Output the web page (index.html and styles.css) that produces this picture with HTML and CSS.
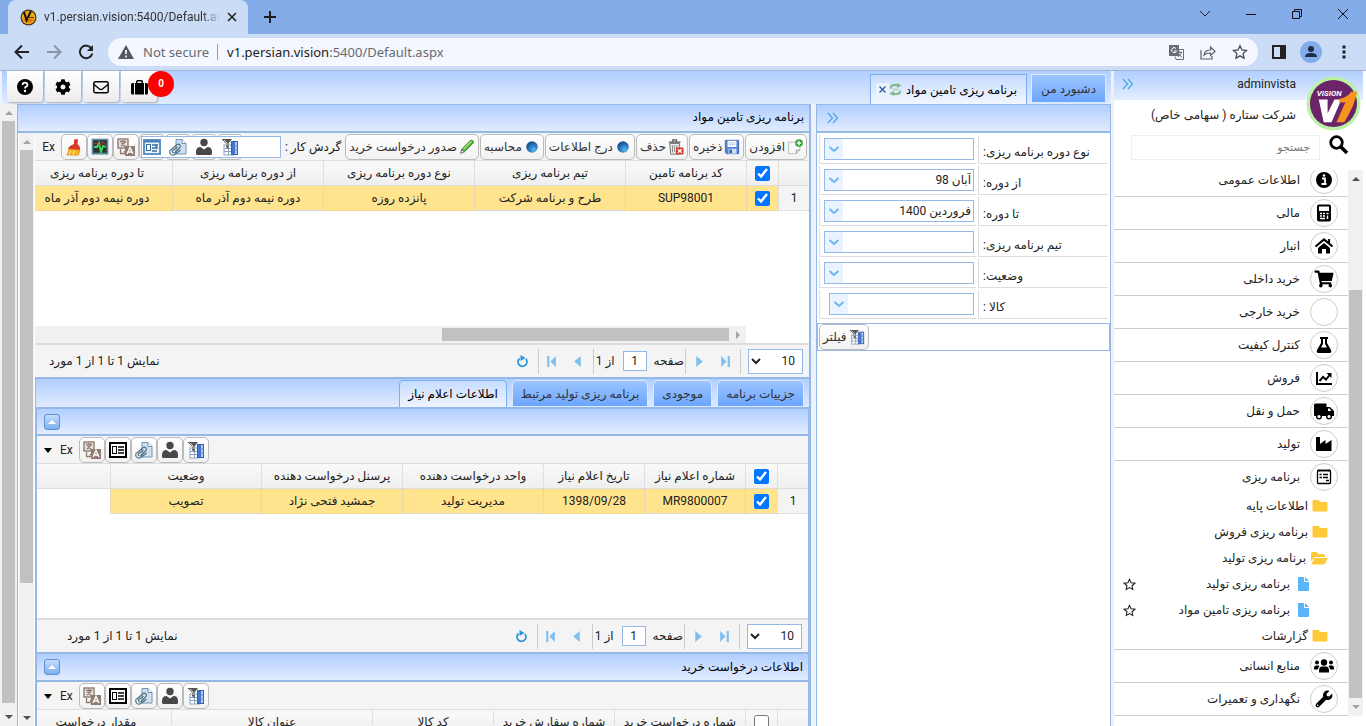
FILE: index.html
```html
<!DOCTYPE html>
<html lang="fa">
<head>
<meta charset="utf-8">
<title>v1.persian.vision:5400/Default.aspx</title>
<link rel="stylesheet" href="styles.css">
</head>
<body>
<svg class="defs" aria-hidden="true">
  <symbol id="i-filter" viewBox="0 0 18 18"><rect x="3" y="7" width="9" height="10" fill="#fff" stroke="#8aa0c4"/><path d="M3 10.500h8M3 13.500h8M7.500 8v9" stroke="#8aa0c4"/><rect x="10.500" y="3.500" width="6" height="13" fill="#b5cdf5" stroke="#3b5d9b"/><rect x="11" y="4" width="3" height="12" fill="#3d74d6"/><path d="M11 8h6M11 12h6" stroke="#5c80bd"/><path d="M.5 1h10.500L7.500 5.500V11L5 9V5.500z" fill="#555"/><path d="M3 2l3 3v3" stroke="#ddd" fill="none"/></symbol>
  <symbol id="i-person" viewBox="0 0 18 18"><circle cx="9" cy="4.500" r="3.700" fill="#484848"/><path d="M1 14q0-5 4.500-5L9 11.500 12.500 9Q17 9 17 14v1.500q0 1.500-1.500 1.500h-13Q1 17 1 15.500z" fill="#484848"/></symbol>
  <symbol id="i-clip" viewBox="0 0 18 18"><path d="M7 1.500h6l4 4V16H7z" fill="#cfe1f0" stroke="#6e93b8"/><path d="M13 1.500v4h4" fill="#fff" stroke="#6e93b8"/><path d="M2 12l6-5.500q2-1 3 .5t-.5 3L6 14.500q-1.500 1-2.300 0t.3-2L8.500 9M1.500 11.500Q0 14 1.500 16t4.500.5L11.500 12" fill="none" stroke="#4d6f85" stroke-width="1.200"/></symbol>
  <symbol id="i-card" viewBox="0 0 18 18"><rect x="1" y="2" width="16" height="14" fill="#fff" stroke="#000" stroke-width="2"/><rect x="3.500" y="5.500" width="4" height="7" fill="#fff" stroke="#000"/><path d="M9 6h6M9 9h6M9 12h6" stroke="#000" stroke-width="1.500"/></symbol>
  <symbol id="i-form" viewBox="0 0 18 18"><rect x="1" y="2" width="16" height="14" fill="#e9f3fc" stroke="#5b93c4" stroke-width="2"/><path d="M1 3.500h16" stroke="#4a7fb5" stroke-width="2"/><rect x="3.500" y="6.500" width="4" height="6" fill="#fff" stroke="#3a6f9f"/><path d="M9 7h6M9 10h6M9 13h5M12 7l2 2" stroke="#3a6f9f" stroke-width="1.400"/></symbol>
  <symbol id="i-lang" viewBox="0 0 18 18"><rect x="1" y="1" width="10" height="9" fill="#e7dfda" stroke="#8e7c73" stroke-width="1.400"/><path d="M3 3.500h6M6 2v2M4 8l4-4M4.500 5l4 4M3.500 11v4.500H9M7 13l2.500 2.500" stroke="#8e7c73" stroke-width="1.300" fill="none"/><rect x="8" y="8" width="10" height="10" fill="#8e7c73"/><path d="M10 16l3-6.500 3 6.500M11.200 14h3.600" fill="none" stroke="#fff" stroke-width="1.400"/></symbol>
  <symbol id="i-chart" viewBox="0 0 18 18"><rect x="1.500" y="1.500" width="15" height="14" fill="#2a3438" stroke="#5a87a4" stroke-width="1.600"/><path d="M3 9h3l2-4 2 9 2-6 3 1" stroke="#3ddb55" stroke-width="1.800" fill="none"/><path d="M3 6l3-1 3 2 3-3 3 3" stroke="#d33" fill="none"/><path d="M1 16.500h16" stroke="#9fb4c0"/></symbol>
  <symbol id="i-brush" viewBox="0 0 18 18"><path d="M4 9l11 2-1.500 6H2q2-3 2-8z" fill="#f5b52c" stroke="#d99a20"/><path d="M5 13l-1 4M9 13l-1 4" stroke="#fde08a"/><path d="M3.500 11L5 8l4-2V2q2.500-2 4 0l-.5 4 2.500 3-.5 3z" fill="#d83a27"/></symbol>
  <symbol id="i-add" viewBox="0 0 18 18"><path d="M1.500 3.500h13v9l-4 4h-9z" fill="#f8f8f8" stroke="#b5b5b5"/><path d="M10.500 16.500v-4h4" fill="#ddd" stroke="#999"/><circle cx="13.500" cy="4.500" r="4.300" fill="#25a32a"/><path d="M13.500 2v5M11 4.500h5" stroke="#fff" stroke-width="1.600"/></symbol>
  <symbol id="i-save" viewBox="0 0 18 18"><path d="M1.500 1.500h15v15H3l-1.500-1.500z" fill="#5583d7" stroke="#3a61ae"/><rect x="4" y="2" width="10" height="7" fill="#fff"/><path d="M5 4.500h8M5 6.500h8" stroke="#aac1e8"/><rect x="5" y="11" width="9" height="5.500" fill="#d3e0f5"/><rect x="6" y="12" width="3" height="4" fill="#3a5da5"/></symbol>
  <symbol id="i-trash" viewBox="0 0 18 18"><path d="M2 5h11l-1 12H3z" fill="#eee" stroke="#666"/><path d="M5 7v8M7.500 7v8M10 7v8" stroke="#777"/><path d="M1 3.500h13M5.500 3V1h4v2" stroke="#555" stroke-width="1.500" fill="none"/><rect x="9" y="9.500" width="8.500" height="8" rx="1.500" fill="#d43a20"/><path d="M11 11.500l4.500 4M15.500 11.500l-4.500 4" stroke="#fff" stroke-width="1.600"/></symbol>
  <radialGradient id="g-ball" cx=".65" cy=".75" r=".75"><stop offset="0" stop-color="#5cb7f0"/><stop offset=".6" stop-color="#2473b8"/><stop offset="1" stop-color="#174a86"/></radialGradient>
  <symbol id="i-ball" viewBox="0 0 18 18"><circle cx="9" cy="9" r="6.500" fill="url(#g-ball)"/></symbol>
  <symbol id="i-pencil" viewBox="0 0 18 18"><path d="M2 16l1.500-5L13 1.500q1.500-.5 2.500.5t.5 2.500L6.500 14z" fill="#4caf2f" stroke="#2e7d1c"/><path d="M5 11.500l9-9" stroke="#b4ea8d" stroke-width="1.500"/><path d="M2 16l1-4 3 2.500z" fill="#eee" stroke="#555" stroke-width=".7"/></symbol>
  <symbol id="i-dbl" viewBox="0 0 12 12"><path d="M1 1l4.500 5L1 11M6 1l4.500 5L6 11" fill="none" stroke="#4fa6e8" stroke-width="1.300"/></symbol>
  <symbol id="i-down" viewBox="0 0 12 12"><path d="M1.500 4L6 8l4.500-4" fill="none" stroke="#6cb8ee" stroke-width="2"/></symbol>
  <symbol id="i-next" viewBox="0 0 12 12"><path d="M3 1v10l6-5z" fill="#7dc0f0"/></symbol>
  <symbol id="i-last" viewBox="0 0 12 12"><path d="M2 1v10l5-5zM8 1h2v10H8z" fill="#7dc0f0"/></symbol>
  <symbol id="i-refresh" viewBox="0 0 13 13"><path d="M3.500 3.500A4.500 4.500 0 1 0 9.800 3.800" fill="none" stroke="#2b93d8" stroke-width="1.700"/><path d="M4.500 0l5 3-5 3z" fill="#2b93d8"/></symbol>
  <symbol id="i-star" viewBox="0 0 24 24"><path d="M12 2.500l2.900 6.400 6.900.8-5.100 4.700 1.400 6.900-6.100-3.500-6.100 3.500 1.400-6.900-5.100-4.700 6.900-.8z" fill="none" stroke="currentColor" stroke-width="2"/></symbol>
  <symbol id="i-folder" viewBox="0 0 16 14"><path d="M1.500 1h5l2 2h6q1 0 1 1v7.500q0 1-1 1h-13q-1 0-1-1V2q0-1 1-1z" fill="#ffca3a"/></symbol>
  <symbol id="i-open" viewBox="0 0 18 14"><path d="M1 10V2.500Q1 1 2.500 1h4l2 2h5q1.500 0 1.500 1.500V6H5z" fill="#ffca3a"/><path d="M5.500 7H17q1 0 .5 1l-2.500 4.500q-.5 1-1.500 1H2q-1 0-.5-1L4 8q.5-1 1.500-1z" fill="#ffca3a"/></symbol>
  <symbol id="i-file" viewBox="0 0 12 14"><path d="M2 0h5v5h5v8q0 1-1 1H2q-1 0-1-1V1q0-1 1-1zM8 0l4 4H8z" fill="#5ab5fa"/></symbol>
</svg>

<header class="browser" dir="ltr">
  <div class="strip">
    <div class="btab">
      <svg class="fav" viewBox="0 0 17 17"><circle cx="8.500" cy="8.500" r="8" fill="#4a3a1c"/><circle cx="8.500" cy="8.500" r="6.800" fill="#f0a818"/><path d="M3 10h11a6 6 0 0 1-11 0z" fill="#d97a0a"/><path d="M4 3l2.500 8L11 2" stroke="#111" stroke-width="2" fill="none"/><path d="M7 8.500h7" stroke="#5b3405"/></svg>
      <span class="btitle">v1.persian.vision:5400/Default.aspx</span>
      <button class="plain" aria-label="Close tab"><svg width="10" height="10" viewBox="0 0 10 10"><path d="M1 1l8 8M9 1L1 9" stroke="#222" stroke-width="1.600"/></svg></button>
    </div>
    <button class="plain newtab" aria-label="New tab"><svg width="12" height="12" viewBox="0 0 12 12"><path d="M6 0v12M0 6h12" stroke="#1c1c1c" stroke-width="2"/></svg></button>
    <div class="winbtns">
      <button class="plain" aria-label="Search tabs"><svg width="12" height="12" viewBox="0 0 12 12"><path d="M1 3l5 5 5-5" fill="none" stroke="#222"/></svg></button>
      <button class="plain" aria-label="Minimize"><svg width="12" height="12" viewBox="0 0 12 12"><path d="M1 6.500h10" stroke="#111"/></svg></button>
      <button class="plain" aria-label="Restore"><svg width="12" height="12" viewBox="0 0 12 12"><path d="M1.500 3.500h7v7h-7zM3.500 3.500v-2h7v7h-2" fill="none" stroke="#111"/></svg></button>
      <button class="plain" aria-label="Close"><svg width="12" height="12" viewBox="0 0 12 12"><path d="M1 1l10 10M11 1L1 11" stroke="#111"/></svg></button>
    </div>
  </div>
  <div class="navbar">
    <button class="plain" aria-label="Back"><svg width="16" height="16" viewBox="0 0 16 16"><path d="M15 8H2M8 1.500L1.500 8 8 14.500" fill="none" stroke="#222" stroke-width="2"/></svg></button>
    <button class="plain" aria-label="Forward"><svg width="16" height="16" viewBox="0 0 16 16"><path d="M1 8h13M8 1.500L14.500 8 8 14.500" fill="none" stroke="#8a95a8" stroke-width="2"/></svg></button>
    <button class="plain" aria-label="Reload"><svg width="16" height="16" viewBox="0 0 16 16"><path d="M13.500 4.500A6.300 6.300 0 1 0 14.300 9.500" fill="none" stroke="#222" stroke-width="2"/><path d="M15 1v6H9z" fill="#222"/></svg></button>
    <div class="omni">
      <svg width="16" height="14" viewBox="0 0 16 14"><path d="M8 0l8 14H0z" fill="#55595f"/><path d="M8 5v4M8 10.500v2" stroke="#fff" stroke-width="1.600"/></svg>
      <span class="notsec">Not secure</span>
      <span class="url"><b>v1.persian.vision</b>:5400/Default.aspx</span>
      <svg width="15" height="15" viewBox="0 0 15 15"><rect x="0" y="0" width="10" height="11" fill="#6b6f75"/><path d="M7 3.500A2.500 2.500 0 1 0 7.500 6H5" fill="none" stroke="#fff"/><path d="M6 11.500l1 3h7.500V4.500H10" fill="none" stroke="#6b6f75"/><path d="M8.500 7.500H13M11 6v1.500M9 12l3.500-4M9.500 8.500l3.500 4" stroke="#6b6f75"/></svg>
      <svg width="16" height="15" viewBox="0 0 16 15"><path d="M1 5v9h11v-3M4 10q1-5 6.500-5V2l4.500 4.500-4.500 4V8Q6 8 4 10z" fill="none" stroke="#5c6066" stroke-width="1.200"/></svg>
      <svg class="bstar" width="16" height="16"><use href="#i-star"/></svg>
    </div>
    <svg width="14" height="14" viewBox="0 0 14 14"><rect x="1" y="1" width="12" height="12" fill="none" stroke="#222" stroke-width="2"/><path d="M8 1h5v12H8z" fill="#222"/></svg>
    <svg class="profile" width="22" height="22" viewBox="0 0 22 22"><circle cx="11" cy="11" r="11" fill="#84ace9"/><circle cx="11" cy="8" r="3" fill="#1d2c44"/><path d="M5 16q0-4 6-4t6 4z" fill="#1d2c44"/></svg>
    <button class="plain" aria-label="Menu"><svg width="4" height="14" viewBox="0 0 4 14"><path d="M.5.5h3v3h-3zM.5 5.500h3v3h-3zM.5 10.500h3v3h-3z" fill="#222"/></svg></button>
  </div>
</header>

<div class="app" dir="ltr">
  <main class="main">
    <div class="topbar">
      <div class="topbtns">
        <button class="tbtn" aria-label="راهنما"><svg width="16" height="16" viewBox="0 0 16 16"><circle cx="8" cy="8" r="8"/><path d="M5.500 6q.2-2.300 2.500-2.300T10.500 6q0 1.200-1.300 1.700T8 9.500" fill="none" stroke="#fff" stroke-width="1.800"/><circle cx="8" cy="12" r="1.200" fill="#fff"/></svg></button>
        <button class="tbtn" aria-label="تنظیمات"><svg width="16" height="16" viewBox="0 0 512 512"><path d="M487.400 315.700l-42.600-24.600c4.300-23.200 4.300-47 0-70.200l42.600-24.600c4.900-2.800 7.100-8.600 5.500-14-11.100-35.600-30-67.800-54.700-94.600-3.800-4.100-10-5.100-14.800-2.300L380.800 110c-17.900-15.400-38.500-27.300-60.800-35.100V25.800c0-5.600-3.900-10.500-9.400-11.700-36.700-8.200-74.300-7.800-109.200 0-5.500 1.200-9.400 6.100-9.400 11.700V75c-22.200 7.900-42.800 19.800-60.800 35.100L88.700 85.500c-4.900-2.800-11-1.900-14.800 2.300-24.700 26.700-43.600 58.900-54.700 94.600-1.700 5.400.6 11.200 5.500 14L67.300 221c-4.300 23.200-4.300 47 0 70.200l-42.600 24.600c-4.900 2.800-7.100 8.600-5.500 14 11.100 35.600 30 67.800 54.700 94.600 3.800 4.100 10 5.100 14.800 2.300l42.600-24.600c17.900 15.400 38.500 27.300 60.800 35.100v49.200c0 5.600 3.900 10.500 9.400 11.700 36.700 8.200 74.300 7.800 109.200 0 5.500-1.200 9.400-6.100 9.400-11.700v-49.200c22.200-7.900 42.800-19.800 60.800-35.100l42.600 24.600c4.900 2.800 11 1.900 14.800-2.300 24.700-26.700 43.600-58.900 54.700-94.600 1.500-5.500-.7-11.300-5.600-14.100zM256 336c-44.100 0-80-35.900-80-80s35.900-80 80-80 80 35.900 80 80-35.900 80-80 80z"/></svg></button>
        <button class="tbtn" aria-label="پیام ها"><svg width="16" height="16" viewBox="0 0 16 16"><rect x=".8" y="2.800" width="14.400" height="11" rx="1.500" fill="none" stroke="#000" stroke-width="1.400"/><path d="M1 5.500l5.500 4.500q1.500 1 3 0L15 5.500" fill="none" stroke="#000" stroke-width="1.400"/></svg></button>
        <button class="tbtn" aria-label="کارتابل"><svg width="17" height="16" viewBox="0 0 17 16"><path d="M4 4h1V2.500Q5 1 6.500 1h4Q12 1 12 2.500V4h1v11.500H4zM6.500 4h4V2.500h-4zM0 5.500Q0 4 1.500 4H3v11.500H1.500Q0 15.500 0 14zM14 4h1.500Q17 4 17 5.500V14q0 1.500-1.500 1.500H14z" fill-rule="evenodd"/></svg><span class="badge">0</span></button>
      </div>
      <nav class="toptabs" dir="rtl">
        <a class="ttab" href="#">دشبورد من</a>
        <a class="ttab on" href="#">برنامه ریزی تامین مواد
          <svg width="13" height="13" viewBox="0 0 13 13"><path d="M1.500 5.500Q2 2 5.500 2H9M11.500 7.500Q11 11 7.500 11H4" stroke="#7dbb87" stroke-width="1.800" fill="none"/><path d="M8 0l4.500 2.500L8 5zM5 8L.5 10.500 5 13z" fill="#7dbb87"/><path d="M3.500 6.500h6" stroke="#b9dcbe" stroke-width="2"/></svg>
          <svg class="tx" width="13" height="13" viewBox="0 0 13 13"><path d="M3.500 3.500l6 6M9.500 3.500l-6 6" stroke="#2c5a9c" stroke-width="1.300"/></svg></a>
      </nav>
    </div>

    <div class="work">
      <div class="vs outer"><i class="up"></i><div class="thumb"></div><i class="dn dark"></i></div>
      <section class="panel">
        <h1 class="phead" dir="rtl">برنامه ریزی تامین مواد</h1>
        <div class="pbody">
          <div class="vs inner"><i class="up"></i><div class="thumb"></div><i class="dn dark"></i></div>
          <div class="content" dir="rtl">
            <section class="grid1">
              <div class="bar">
                <button class="btn"><svg><use href="#i-add"/></svg>افزودن</button>
                <button class="btn"><svg><use href="#i-save"/></svg>ذخیره</button>
                <button class="btn"><svg><use href="#i-trash"/></svg>حذف</button>
                <button class="btn"><svg><use href="#i-ball"/></svg>درج اطلاعات</button>
                <button class="btn"><svg><use href="#i-ball"/></svg>محاسبه</button>
                <button class="btn"><svg><use href="#i-pencil"/></svg>صدور درخواست خرید</button>
                <label class="flowlab" for="flow">گردش کار :</label>
                <input class="flow" id="flow" type="text">
                <div class="tools over">
                  <button class="btn ico" aria-label="فیلتر"><svg><use href="#i-filter"/></svg></button>
                  <button class="btn ico" aria-label="کاربر"><svg><use href="#i-person"/></svg></button>
                  <button class="btn ico" aria-label="پیوست"><svg><use href="#i-clip"/></svg></button>
                  <button class="btn ico" aria-label="فرم"><svg><use href="#i-form"/></svg></button>
                  <button class="btn ico" aria-label="ترجمه"><svg><use href="#i-lang"/></svg></button>
                  <button class="btn ico" aria-label="نمودار"><svg><use href="#i-chart"/></svg></button>
                  <button class="btn ico" aria-label="پاک کردن"><svg><use href="#i-brush"/></svg></button>
                  <span class="ex">Ex</span>
                </div>
              </div>
              <div class="view v1">
                <table>
                  <colgroup><col class="c31"><col class="c32"><col class="c121"><col class="c151"><col class="c151"><col class="c151"><col class="c151"></colgroup>
                  <thead><tr><th></th><th><input type="checkbox" checked aria-label="انتخاب همه"></th><th>کد برنامه تامین</th><th>تیم برنامه ریزی</th><th>نوع دوره برنامه ریزی</th><th>از دوره برنامه ریزی</th><th>تا دوره برنامه ریزی</th></tr></thead>
                  <tbody><tr><td class="num">1</td><td><input type="checkbox" checked aria-label="انتخاب ردیف"></td><td>SUP98001</td><td>طرح و برنامه شرکت</td><td>پانزده روزه</td><td>دوره نیمه دوم آذر ماه</td><td>دوره نیمه دوم آذر ماه</td></tr></tbody>
                </table>
              </div>
              <div class="hs" dir="ltr"><div class="hthumb"></div><i class="rt"></i></div>
              <div class="pager">
                <select aria-label="تعداد"><option>10</option></select><i class="sep"></i>
                <button class="pg" aria-label="آخر"><svg><use href="#i-last"/></svg></button><button class="pg" aria-label="بعد"><svg><use href="#i-next"/></svg></button><i class="sep"></i>
                <label for="p1">صفحه</label><input id="p1" type="text" value="1"><span class="of">از 1</span><i class="sep"></i>
                <button class="pg" aria-label="قبل"><svg class="flip"><use href="#i-next"/></svg></button><button class="pg" aria-label="اول"><svg class="flip"><use href="#i-last"/></svg></button><i class="sep"></i>
                <button class="pg" aria-label="بازخوانی"><svg><use href="#i-refresh"/></svg></button>
                <span class="info">نمایش 1 تا 1 از 1 مورد</span>
              </div>
            </section>

            <section class="lower">
              <nav class="tabs">
                <a class="tab" href="#">جزییات برنامه</a><a class="tab" href="#">موجودی</a><a class="tab" href="#">برنامه ریزی تولید مرتبط</a><a class="tab on" href="#">اطلاعات اعلام نیاز</a>
              </nav>
              <div class="inset">
                <div class="shead"><span></span><button class="fold" aria-label="جمع کردن"></button></div>
                <div class="bar">
                  <div class="tools">
                    <button class="btn ico" aria-label="فیلتر"><svg><use href="#i-filter"/></svg></button>
                    <button class="btn ico" aria-label="کاربر"><svg><use href="#i-person"/></svg></button>
                    <button class="btn ico" aria-label="پیوست"><svg><use href="#i-clip"/></svg></button>
                    <button class="btn ico" aria-label="فرم"><svg><use href="#i-card"/></svg></button>
                    <button class="btn ico" aria-label="ترجمه"><svg><use href="#i-lang"/></svg></button>
                    <span class="ex">Ex</span><i class="caret"></i>
                  </div>
                </div>
                <div class="view v2">
                  <table class="wide">
                    <colgroup><col class="c31"><col class="c32"><col class="c101"><col class="c101"><col class="c141"><col class="c141"><col class="c151"><col></colgroup>
                    <thead><tr><th></th><th><input type="checkbox" checked aria-label="انتخاب همه"></th><th>شماره اعلام نیاز</th><th>تاریخ اعلام نیاز</th><th>واحد درخواست دهنده</th><th>پرسنل درخواست دهنده</th><th>وضعیت</th><th></th></tr></thead>
                    <tbody><tr><td class="num">1</td><td><input type="checkbox" checked aria-label="انتخاب ردیف"></td><td>MR9800007</td><td>1398/09/28</td><td>مدیریت تولید</td><td>جمشید فتحی نژاد</td><td>تصویب</td><td class="blank"></td></tr></tbody>
                  </table>
                </div>
                <div class="pager">
                  <select aria-label="تعداد"><option>10</option></select><i class="sep"></i>
                  <button class="pg" aria-label="آخر"><svg><use href="#i-last"/></svg></button><button class="pg" aria-label="بعد"><svg><use href="#i-next"/></svg></button><i class="sep"></i>
                  <label for="p2">صفحه</label><input id="p2" type="text" value="1"><span class="of">از 1</span><i class="sep"></i>
                  <button class="pg" aria-label="قبل"><svg class="flip"><use href="#i-next"/></svg></button><button class="pg" aria-label="اول"><svg class="flip"><use href="#i-last"/></svg></button><i class="sep"></i>
                  <button class="pg" aria-label="بازخوانی"><svg><use href="#i-refresh"/></svg></button>
                  <span class="info far">نمایش 1 تا 1 از 1 مورد</span>
                </div>
                <div class="shead second"><span>اطلاعات درخواست خرید</span><button class="fold" aria-label="جمع کردن"></button></div>
                <div class="bar">
                  <div class="tools">
                    <button class="btn ico" aria-label="فیلتر"><svg><use href="#i-filter"/></svg></button>
                    <button class="btn ico" aria-label="کاربر"><svg><use href="#i-person"/></svg></button>
                    <button class="btn ico" aria-label="پیوست"><svg><use href="#i-clip"/></svg></button>
                    <button class="btn ico" aria-label="فرم"><svg><use href="#i-card"/></svg></button>
                    <button class="btn ico" aria-label="ترجمه"><svg><use href="#i-lang"/></svg></button>
                    <span class="ex">Ex</span><i class="caret"></i>
                  </div>
                </div>
                <div class="view">
                  <table>
                    <colgroup><col class="c31"><col class="c32"><col class="c131"><col class="c121"><col class="c121"><col class="c201"><col class="c151"></colgroup>
                    <thead><tr><th></th><th><input type="checkbox" aria-label="انتخاب همه"></th><th>شماره درخواست خرید</th><th>شماره سفارش خرید</th><th>کد کالا</th><th>عنوان کالا</th><th>مقدار درخواست</th></tr></thead>
                  </table>
                </div>
              </div>
            </section>
          </div>
        </div>
      </section>

      <aside class="filter">
        <div class="phead fh"><svg width="12" height="12"><use href="#i-dbl"/></svg></div>
        <form class="fform" dir="rtl">
          <label for="f1">نوع دوره برنامه ریزی:</label><div class="cell"><div class="combo"><select id="f1"><option></option></select><svg><use href="#i-down"/></svg></div></div>
          <label for="f2">از دوره:</label><div class="cell"><div class="combo"><select id="f2"><option>آبان 98</option></select><svg><use href="#i-down"/></svg></div></div>
          <label for="f3">تا دوره:</label><div class="cell"><div class="combo"><select id="f3"><option>فروردین 1400</option></select><svg><use href="#i-down"/></svg></div></div>
          <label for="f4">تیم برنامه ریزی:</label><div class="cell"><div class="combo"><select id="f4"><option></option></select><svg><use href="#i-down"/></svg></div></div>
          <label for="f5">وضعیت:</label><div class="cell"><div class="combo"><select id="f5"><option></option></select><svg><use href="#i-down"/></svg></div></div>
          <label for="f6">کالا :</label><div class="cell"><div class="combo short"><select id="f6"><option></option></select><svg><use href="#i-down"/></svg></div></div>
        </form>
        <div class="fbar"><button class="btn" dir="rtl"><svg><use href="#i-filter"/></svg>فیلتر</button></div>
      </aside>
    </div>
  </main>

  <aside class="side" dir="rtl">
    <div class="user"><span>adminvista</span><svg width="12" height="12"><use href="#i-dbl"/></svg></div>
    <svg class="logo" viewBox="0 0 56 56"><circle cx="28" cy="28" r="27.500" fill="#b9f2a5"/><circle cx="28" cy="28" r="24" fill="#6b2468"/><path d="M13 24h9v14l7-14h7L26 47h-8z" fill="#fff"/><path d="M35 23q7-1 11-7h6q-2 13-13 31h-8l9-20h-7z" fill="#f7941d"/><text x="11" y="20" class="logotext">VISION</text></svg>
    <div class="company">شرکت ستاره ( سهامی خاص)</div>
    <div class="search"><svg width="20" height="20" viewBox="0 0 20 20"><circle cx="7.500" cy="7.500" r="5.800" fill="none" stroke="#000" stroke-width="2.800"/><path d="M12 12l6 6" stroke="#000" stroke-width="3.500"/></svg><input type="text" placeholder="جستجو" aria-label="جستجو"></div>
    <div class="listwrap">
      <div class="vs sidebar"><i class="up dark"></i><div class="thumb"></div><i class="dn"></i></div>
      <ul class="menu">
        <li><a href="#"><span class="ring"><svg viewBox="0 0 20 20"><circle cx="10" cy="10" r="8"/><path d="M8 8.500h3v5M7.500 14h5" stroke="#fff" stroke-width="1.800" fill="none"/><circle cx="10" cy="5.500" r="1.300" fill="#fff"/></svg></span>اطلاعات عمومی</a></li>
        <li><a href="#"><span class="ring"><svg viewBox="0 0 20 20"><rect x="4" y="2.500" width="12" height="15" rx="1" fill="none" stroke="#000" stroke-width="2"/><path d="M4 8h12v9.500H4z"/><path d="M6 10.500h2M9 10.500h2M6 13h2M9 13h2M6 15.500h5M12.500 10.500h2M13.500 12.500v3.500" stroke="#fff" stroke-width="1.400"/></svg></span>مالی</a></li>
        <li><a href="#"><span class="ring"><svg viewBox="0 0 20 20"><path d="M1.500 10.500L10 3.500l8.500 7M15 7.500V3" fill="none" stroke="#000" stroke-width="2.200"/><path d="M10 7l6 5v5.500h-4V13H8v4.500H4V12z"/></svg></span>انبار</a></li>
        <li><a href="#"><span class="ring"><svg viewBox="-16 -16 608 544"><path d="M528.120 301.319l47.273-208C578.806 78.301 567.391 64 551.990 64H159.208l-9.166-44.810C147.758 8.021 137.930 0 126.529 0H24C10.745 0 0 10.745 0 24v16c0 13.255 10.745 24 24 24h69.883l70.248 343.435C147.325 417.100 136 435.222 136 456c0 30.928 25.072 56 56 56s56-25.072 56-56c0-15.674-6.447-29.835-16.824-40h209.647C430.447 426.165 424 440.326 424 456c0 30.928 25.072 56 56 56s56-25.072 56-56c0-22.172-12.888-41.332-31.579-50.405l5.517-24.276c3.413-15.018-8.002-29.319-23.403-29.319H218.117l-6.545-32h293.145c11.206 0 20.920-7.754 23.403-18.681z"/></svg></span>خرید داخلی</a></li>
        <li><a href="#"><span class="ring"></span>خرید خارجی</a></li>
        <li><a href="#"><span class="ring"><svg viewBox="0 0 20 20"><path d="M6 2h8v2h-1v4l4 7q1 3-1.500 3h-11Q2 18 3 15l4-7V4H6zM9 4v5l-2 3.500h6L11 9V4z" fill-rule="evenodd"/></svg></span>کنترل کیفیت</a></li>
        <li><a href="#"><span class="ring"><svg viewBox="0 0 20 20"><path d="M3 4v12h15M5.500 13l3.500-4 3 2.500 4-5" fill="none" stroke="#000" stroke-width="2"/><path d="M12.500 5H17.500v5z"/></svg></span>فروش</a></li>
        <li><a href="#"><span class="ring"><svg viewBox="0 0 20 20"><path d="M0 4q0-1.500 1.500-1.500h11V6h3.500l4 4v5H1q-1 0-1-1z"/><path d="M14 7.500h1.500L17.500 10H14z" fill="#fff"/><circle cx="5" cy="15.500" r="2.300" fill="#fff" stroke="#000" stroke-width="1.400"/><circle cx="15" cy="15.500" r="2.300" fill="#fff" stroke="#000" stroke-width="1.400"/></svg></span>حمل و نقل</a></li>
        <li><a href="#"><span class="ring"><svg viewBox="0 0 20 20"><path d="M2 17V3h4v7l5.500-4v4L17.500 6v11z"/></svg></span>تولید</a></li>
        <li class="opened"><a href="#"><span class="ring"><svg viewBox="0 0 20 20"><rect x="3.500" y="3.500" width="13" height="13" rx="1" fill="none" stroke="#000" stroke-width="1.300"/><path d="M3.500 3.500h13M5.500 7.500h2M9 7.500h5M5.500 10.500H8M9 10.500h5M12 13.500h3M5 2.500v2M15 2.500v2" stroke="#000" stroke-width="1.300"/></svg></span>برنامه ریزی</a>
          <ul class="sub">
            <li><a href="#"><svg width="16" height="14"><use href="#i-folder"/></svg>اطلاعات پایه</a></li>
            <li><a href="#"><svg width="16" height="14"><use href="#i-folder"/></svg>برنامه ریزی فروش</a></li>
            <li><a href="#"><svg width="18" height="14"><use href="#i-open"/></svg>برنامه ریزی تولید</a></li>
            <li class="leaf"><a href="#"><svg width="12" height="14"><use href="#i-file"/></svg>برنامه ریزی تولید</a><button class="plain" aria-label="نشان کردن"><svg width="13" height="13"><use href="#i-star"/></svg></button></li>
            <li class="leaf"><a href="#"><svg width="12" height="14"><use href="#i-file"/></svg>برنامه ریزی تامین مواد</a><button class="plain" aria-label="نشان کردن"><svg width="13" height="13"><use href="#i-star"/></svg></button></li>
            <li><a href="#"><svg width="16" height="14"><use href="#i-folder"/></svg>گزارشات</a></li>
          </ul></li>
        <li><a href="#"><span class="ring"><svg viewBox="0 0 20 20"><circle cx="10" cy="6.500" r="3.200"/><path d="M5 15q0-4.500 3-4.500h4q3 0 3 4.500v1.500H5z"/><circle cx="3" cy="6.500" r="2"/><circle cx="17" cy="6.500" r="2"/><path d="M0 12.500Q0 9.500 2 9.500h2.500Q6 10 5 11q-1 1-1.200 2.500H0zM20 12.500q0-3-2-3h-2.500Q14 10 15 11q1 1 1.200 2.500H20z"/></svg></span>منابع انسانی</a></li>
        <li><a href="#"><span class="ring"><svg viewBox="-48 -48 608 608"><path d="M507.730 109.100c-2.240-9.030-13.540-12.090-20.120-5.510l-74.360 74.360-67.880-11.310-11.310-67.880 74.360-74.360c6.620-6.620 3.430-17.900-5.660-20.160-47.380-11.740-99.550.91-136.580 37.930-39.640 39.640-50.550 97.100-34.050 147.200L18.740 402.760c-24.990 24.990-24.990 65.510 0 90.500 24.990 24.990 65.510 24.990 90.500 0l213.210-213.210c50.120 16.710 107.470 5.680 147.370-34.220 37.070-37.070 49.700-89.320 37.910-136.730zM64 472c-13.250 0-24-10.750-24-24 0-13.260 10.750-24 24-24s24 10.740 24 24c0 13.250-10.750 24-24 24z"/></svg></span>نگهداری و تعمیرات</a></li>
      </ul>
    </div>
  </aside>
</div>
</body>
</html>
```

FILE: styles.css
```css
* { box-sizing: border-box; }
body {
  margin: 0;
  height: 100vh;
  display: flex;
  flex-direction: column;
  overflow: hidden;
  font-family: Roboto, "DejaVu Sans", sans-serif;
  font-size: 12px;
  color: #222;
  background: #fff;
}
button, input, select { font: inherit; color: inherit; }
a { color: inherit; text-decoration: none; }
ul { list-style: none; margin: 0; padding: 0; }
svg { flex: none; display: block; }
.defs { position: absolute; width: 0; height: 0; }
.plain { border: 0; background: none; padding: 0; display: flex; align-items: center; justify-content: center; }
.flip { transform: scaleX(-1); }

/* browser frame */
.browser { flex: none; font-family: "Noto Sans", sans-serif; }
.strip { display: flex; height: 34px; background: #84ace9; padding-left: 8px; }
.btab { width: 240px; background: #cbdcf6; border-radius: 8px 8px 0 0; display: flex; align-items: center; padding: 0 11px 0 12px; }
.fav { width: 17px; height: 17px; }
.btitle { flex: 1; margin: 0 7px; overflow: hidden; white-space: nowrap; font-family: Roboto, sans-serif; font-size: 12px; color: #333; mask-image: linear-gradient(90deg, #000 90%, transparent); }
.newtab { margin-left: 16px; }
.winbtns { margin-left: auto; display: flex; }
.winbtns .plain { width: 46px; padding-bottom: 6px; }
.navbar { height: 37px; background: #cbdcf6; border-bottom: 1px solid #a5b5d0; display: flex; align-items: center; gap: 16px; padding: 0 20px 0 14px; }
.profile { margin: 0 4px 0 -2px; }
.omni { flex: 1; height: 28px; border-radius: 14px; background: #f4f7fd; display: flex; align-items: center; gap: 16px; padding: 0 10px; margin: 0 -2px; font-size: 13px; color: #666b73; }
.omni .notsec { margin: 0 -7px; padding-right: 8px; border-right: 1px solid #999fa8; line-height: 16px; }
.omni .url { flex: 1; }
.omni .url b { font-weight: 400; color: #222; }
.bstar { color: #4c5056; }

/* page frame */
.app { flex: 1; min-height: 0; display: flex; }
.main { flex: 1; min-width: 0; display: flex; flex-direction: column; padding-left: 2px; border-right: 2px solid #f2f2f2; background: #eef3fb; }
.topbar { flex: none; height: 33px; display: flex; justify-content: space-between; background: linear-gradient(#b0ceff, #e0ebff); padding-left: 5px; }
.topbtns { display: flex; gap: 2px; align-items: flex-start; }
.tbtn { position: relative; width: 36px; height: 31px; padding: 0; border: 0; border-radius: 0 0 4px 4px; background: linear-gradient(#fff, #ececec); box-shadow: 1px 1px 2px #aaa; display: flex; align-items: center; justify-content: center; }
.badge { position: absolute; left: 27px; top: 0; width: 26px; height: 26px; border-radius: 50%; background: #f00; color: #fff; font-size: 10px; line-height: 25px; font-weight: 700; z-index: 1; }
.toptabs { display: flex; gap: 4px; padding: 3px 5px 0 0; }
.ttab { height: 29px; display: flex; align-items: center; padding: 0 9px; border: 1px solid #dbe8ff; background: linear-gradient(#9cc4ff, #6ca6ff); color: #333; gap: 4px; }
.ttab.on { height: 30px; padding: 0 9px 0 5px; border: 1px solid #79aef5; border-bottom: 0; background: linear-gradient(#c6dcff, #f2f7ff); color: #000; }
.ttab .tx { background: #eaf2ff; margin-right: -4px; }
.work { flex: 1; min-height: 0; display: flex; }

/* scroll tracks */
.vs { flex: none; display: flex; flex-direction: column; align-items: center; background: #f1f1f1; }
.vs .thumb { width: 13px; background: #c1c1c1; }
.up, .dn { border: 4px solid transparent; width: 8px; height: 4px; flex: none; }
.up { border-top: 0; border-bottom-color: #a3a3a3; margin: 7px 0 6px; }
.dn { border-bottom: 0; border-top-color: #a3a3a3; margin: 7px 0; }
.up.dark { border-bottom-color: #505050; }
.dn.dark { border-top-color: #505050; }
.outer { width: 13px; margin-right: 2px; }
.outer .thumb { flex: 1; margin-bottom: 5px; }
.inner { width: 15px; margin-left: 1px; }
.inner .thumb { height: 433px; }
.inner .dn { margin: auto 0 6px; }

/* main panel */
.panel { flex: 1; min-width: 0; display: flex; flex-direction: column; border: 1px solid #95b8e7; border-bottom: 0; border-right-width: 2px; background: #fff; margin-right: 5px; }
.phead { flex: none; height: 28px; margin: 0; padding: 0 5px; font-size: 12px; line-height: 25px; font-weight: 400; color: #000; background: linear-gradient(#b0ceff, #e2ecff); border-bottom: 2px solid #95b8e7; }
.pbody { flex: 1; min-height: 0; display: flex; }
.content { flex: 1; min-width: 0; margin-left: 1px; overflow: hidden; }
.bar { height: 28px; display: flex; align-items: center; background: #f4f4f4; padding: 1px 2px 0 0; border-bottom: 1px solid #ddd; }
.btn { display: flex; align-items: center; gap: 2px; height: 26px; padding: 0 3px; margin-left: 1px; border: 1px solid #bbb; border-radius: 5px; background: linear-gradient(#fff, #f1f1f1); white-space: nowrap; flex: none; color: #333; }
.btn svg { width: 16px; height: 16px; position: relative; z-index: 2; }
.btn.ico { width: 26px; padding: 0; justify-content: center; margin: 0; }
.btn.ico svg { width: 18px; height: 18px; }
.flowlab { margin: 0 3px 0 4px; white-space: nowrap; }
.flow { position: relative; z-index: 1; width: 140px; height: 22px; border: 1px solid #95b8e7; background: #fff; padding: 0 4px; flex: none; }
.tools { display: flex; align-items: center; margin-right: auto; }
.tools.over { margin: 0 -102px 0 0; }
.ex { margin-right: 6px; }
.caret { border: 4px solid transparent; border-bottom: 0; border-top: 5px solid #000; margin: 0 8px 0 7px; }

.view { overflow: hidden; background: #fff; }
.v1 { height: 165px; }
.v2 { height: 154px; }
table { table-layout: fixed; border-collapse: separate; border-spacing: 0; width: 0; }
table.wide { width: 100%; }
.c31 { width: 31px; } .c32 { width: 32px; } .c101 { width: 101px; } .c121 { width: 121px; } .c131 { width: 131px; } .c141 { width: 141px; } .c151 { width: 151px; } .c201 { width: 201px; }
th, td { height: 25px; padding: 0; text-align: center; font-weight: 400; white-space: nowrap; border-left: 1px dotted #ccc; }
th { background: linear-gradient(#f9f9f9, #efefef); border-bottom: 1px solid #ddd; }
td { background: #ffe48d; border-bottom: 1px dotted #ccc; }
td.num { background: #f4f4f4; }
td.blank { background: #fff; border: 0; }
table.wide th:last-child { border-left: 0; }
th input, td input { width: 15px; height: 15px; display: block; margin: 0 auto; accent-color: #0075ff; }

.hs { height: 17px; display: flex; align-items: center; background: #f1f1f1; margin-right: 63px; justify-content: flex-end; }
.hthumb { width: 287px; height: 13px; background: #c1c1c1; }
.rt { border: 4px solid transparent; border-right: 0; border-left-color: #a3a3a3; margin: 0 6px 0 7px; }
.pager { height: 34px; display: flex; align-items: center; background: #f4f4f4; border-top: 2px solid #ddd; padding: 0 6px; white-space: nowrap; }
.pager select { width: 55px; height: 25px; border: 1px solid #95b8e7; background: #fff; padding: 0 3px 0 0; margin-left: 7px; }
.sep { width: 1px; height: 25px; background: #ccc; }
.pg { width: 26px; height: 26px; border: 0; background: none; padding: 0; display: flex; align-items: center; justify-content: center; }
.pg svg { width: 13px; height: 13px; }
.pager .sep + .pg { margin-right: 2px; }
.pager label { margin: 0 1px 0 7px; }
.pager input { width: 24px; height: 20px; padding: 0; text-align: center; border: 1px solid #95b8e7; }
.of { margin: 0 8px 0 2px; }
.info { margin: 0 auto 0 8px; }
.info.far { margin-left: 24px; }

/* detail tabs */
.lower { border-left: 1px solid #95b8e7; }
.tabs { height: 32px; display: flex; align-items: flex-end; gap: 5px; padding: 0 5px; background: linear-gradient(#b0ceff, #e0ebff); border-top: 2px solid #95b8e7; border-bottom: 2px solid #95b8e7; }
.tab { height: 27px; line-height: 26px; padding: 0 8px; border: 1px solid #dbe8ff; border-radius: 5px 5px 0 0; background: linear-gradient(#9cc4ff, #6ca6ff); color: #333; white-space: nowrap; }
.tab.on { border-color: #79aef5; border-bottom: 0; background: linear-gradient(#c6dcff, #eff5ff); color: #000; }
.inset { border-left: 1px solid #95b8e7; border-right: 1px solid #95b8e7; }
.shead { height: 27px; display: flex; align-items: center; justify-content: space-between; padding: 0 5px 0 7px; color: #000; background: linear-gradient(#b0ceff, #e2ecff); border-bottom: 2px solid #95b8e7; }
.shead.second { height: 30px; border-top: 2px solid #95b8e7; }
.fold { width: 16px; height: 16px; border: 1px solid #5b93d6; border-radius: 3px; background: linear-gradient(#c4dcfa, #7fb0ee); padding: 0; display: flex; align-items: center; justify-content: center; }
.fold::before { content: ""; border: 4px solid transparent; border-top: 0; border-bottom-color: #fff; }

/* filter panel */
.filter { flex: none; width: 295px; border: 1px solid #95b8e7; border-bottom: 0; background: #fff; }
.fh { display: flex; align-items: center; padding: 0 10px; }
.fform { display: grid; grid-template-columns: 130px 1fr; grid-auto-rows: 31px; column-gap: 2px; padding: 2px 2px 0; }
.fform label { text-align: left; padding: 8px 0 0 4px; border-left: 1px solid #ddd; border-bottom: 1px solid #ddd; margin-bottom: 2px; line-height: 18px; white-space: nowrap; }
.cell { border-left: 1px solid #ddd; border-bottom: 1px solid #ddd; margin-bottom: 2px; padding: 3px 2px 0 4px; }
.combo { position: relative; }
.combo.short { margin-left: 5px; }
.combo select { display: block; width: 100%; height: 22px; border: 1px solid #95b8e7; background: linear-gradient(90deg, #eaf3ff 18px, #fff 18px); appearance: none; padding: 0 2px; border-radius: 0; }
.combo svg { position: absolute; left: 4px; top: 5px; width: 12px; height: 12px; pointer-events: none; }
.fbar { height: 28px; border: 1px solid #95b8e7; margin-top: 2px; display: flex; align-items: center; }

/* navigation */
.side { position: relative; flex: none; width: 253px; padding-right: 3px; display: flex; flex-direction: column; background: #fff; border-left: 1px solid #eee; }
.user { height: 29px; display: flex; justify-content: space-between; align-items: center; padding: 0 67px 3px 8px; background: linear-gradient(#b0ceff, #e4eeff); }
.logo { position: absolute; right: 5px; top: 5px; width: 55px; height: 55px; direction: ltr; }
.logotext { font: italic 700 8px Roboto, sans-serif; fill: #fff; }
.company { height: 30px; line-height: 30px; padding-right: 67px; }
.search { display: flex; height: 40px; padding: 5px 14px 0 17px; gap: 9px; }
.search input { flex: 1; min-width: 0; height: 25px; border: 1px solid #eee; padding: 0 9px; font-size: 11px; }
.listwrap { display: flex; overflow: hidden; margin-bottom: 10px; flex: 1; min-height: 0; }
.sidebar { width: 15px; }
.sidebar .thumb { margin-top: 103px; width: 13px; height: 409px; }
.menu { flex: 1; margin-top: -6px; }
.menu > li { border-bottom: 1px solid #ccc; }
.menu > li > a { height: 32px; display: flex; align-items: center; gap: 10px; padding-right: 10px; }
.ring { width: 28px; height: 28px; border: 1px solid #ccc; border-radius: 50%; display: flex; align-items: center; justify-content: center; flex: none; }
.ring svg { width: 20px; height: 20px; }
.sub li { display: flex; align-items: center; justify-content: space-between; height: 26px; padding: 0 20px 0 9px; }
.sub a { display: flex; align-items: center; gap: 4px; }
.sub .leaf { padding-right: 39px; }
.leaf a { gap: 7px; }
```
